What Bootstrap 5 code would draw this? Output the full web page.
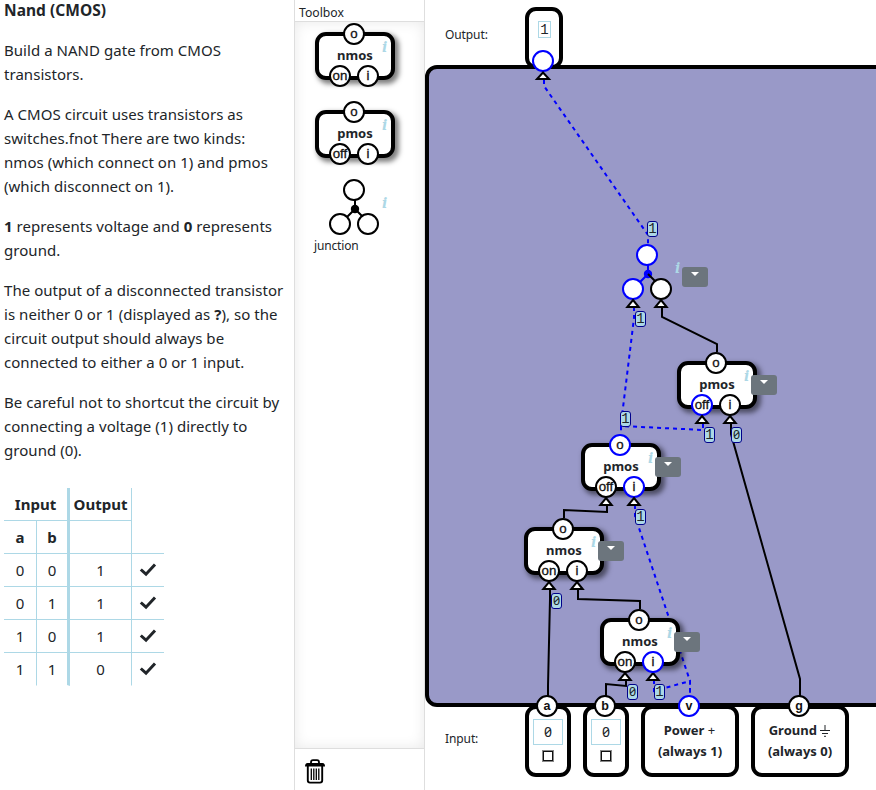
<!DOCTYPE html>
<html lang="en">
<head>
<meta charset="utf-8">
<meta name="viewport" content="width=device-width, initial-scale=1">
<title>Nand (CMOS)</title>
<link href="https://cdn.jsdelivr.net/npm/bootstrap@5.3.0/dist/css/bootstrap.min.css" rel="stylesheet">
<style>
body{font-family:"Noto Sans","Open Sans",sans-serif;font-size:15px;line-height:24px;color:#212529;height:790px;overflow:hidden}
.task{width:295px;border-right:1px solid #dedede;padding:0 0 0 4px;white-space:nowrap}
.task p,.task h1{font-size:15px;line-height:24px;margin:0 0 16px;letter-spacing:.04px}
.task h1{font-weight:700;font-size:15.5px;margin-top:-2px}
.truth{border-collapse:separate;border-spacing:0;table-layout:fixed;width:160px;margin-top:26px;text-align:center}
.truth td,.truth th{height:33px;padding:0;line-height:24px;border-bottom:1px solid lightblue;border-right:1px solid lightblue;vertical-align:middle}
.truth .thick{border-right-width:3px}
.truth td:last-child{border-right:0}
.truth tr:first-child td:last-child,.truth tr:last-child td{border-bottom-color:transparent}
.truth svg{display:block;margin:-1px auto 0}
.toolbox{width:130px;border-right:1px solid #dedede}
.toolbox-head{height:22px;border-bottom:1px solid #dedede;font-size:12.2px;line-height:24px;padding-left:4px;padding-top:1px}
.toolbox-list{padding:10px 0 0 20px;gap:30px;box-shadow:inset 0 0 14px rgba(0,0,0,.09)}
.toolbox-foot{height:42px;border-top:1px solid #dedede;padding:10px 0 0 10px}
.part{position:relative;width:80px;height:48px;flex:none}
.shell{width:80px;height:48px;border:4px solid #000;border-radius:11px;background:#fff;box-shadow:3px 3px 5px 1px rgba(0,0,0,.5);font-weight:700;font-size:13px;line-height:36px;padding-top:1px;text-align:center}
.pin{position:absolute;width:22px;height:22px;border:2px solid #000;border-radius:50%;background:#fff;color:#111;font:13.3px/18px "Liberation Sans",sans-serif;-webkit-text-stroke:.3px #111;display:flex;justify-content:center;white-space:nowrap;z-index:2}
.pin.live,.port.live{border-color:#00f}
.pin-o{left:28px;top:-9px}
.pin-l{left:14px;top:33px}
.pin-r{left:42px;top:33px}
.junction .pin-l{top:25px}.junction .pin-r{top:25px}
.fork{position:absolute;left:0;top:0;z-index:1}
.info{position:absolute;left:67px;top:6px;font:italic bold 14px/18px "DejaVu Serif",serif;color:lightblue}
.drop{position:absolute;left:74px;top:14px;width:26px;height:20px;padding:0;border:0;border-radius:3px;background:#6c757d;display:flex;justify-content:center;z-index:3}
.drop::after{content:"";margin-top:5px;height:0;border:4px solid transparent;border-top-color:#fff;border-bottom:0}
.junction-name{font-size:12px;line-height:18px;margin:-29px 0 0 -1px;letter-spacing:-.15px}
.board{width:451px;position:relative;overflow:hidden}
.out-strip{height:65px;padding:7px 0 0 20px}
.strip-label{width:80px;font-size:12px;line-height:20px;letter-spacing:-.1px}
.out-strip .strip-label{margin-top:18px}
.terminal{position:relative;border:4px solid #000;border-radius:11px;background:#fff;z-index:1;flex:none}
.terminal-out{width:38px;height:62px;padding-top:10px}
.value{border:1px solid lightblue;font-family:"Liberation Mono",monospace;text-align:center}
.terminal-out .value{width:13px;height:17px;font-size:14px;line-height:16px;margin-left:9px}
.port{position:absolute;width:22px;height:22px;border:2px solid #000;border-radius:50%;background:#fff;font:bold 12.5px/18px "Liberation Sans",sans-serif;text-align:center;color:#111;z-index:4}
.terminal-out .port{left:3px;top:39px}
.field{height:642px;margin-right:-20px;border:4px solid #000;border-radius:12px;background:#9999c8}
.in-strip{height:83px;padding:0 0 0 20px;margin-top:-2px}
.in-strip .strip-label{margin-top:24px}
.in-strip .terminal{height:72px;margin-right:12px;font-weight:700;font-size:13px;line-height:21px;text-align:center;padding-top:11px}
.terminal-bit{width:46px}
.terminal-wide{width:98px;text-indent:-1px}
.terminal-bit .value{width:30px;height:26px;margin:-1px 0 6px 4px;font-weight:400;font-size:14px;line-height:24px}
.tick{width:10px;height:10px;border:1px solid #111;outline:.5px solid #888;margin:0 auto}
.thin{font-weight:400}
.zero{font-family:"Noto Sans",sans-serif;font-variant-numeric:slashed-zero}
.diagram{position:absolute;left:0;top:0;width:451px;height:790px;z-index:2}
.wires{position:absolute;left:0;top:0;z-index:3}
.diagram .part{position:absolute}
#j1{left:183px;top:253px}
#p1{left:252px;top:361px}
#p2{left:156px;top:443px}
#n1{left:99px;top:527px}
#n2{left:175px;top:618px}
.bit{position:absolute;width:11px;height:16px;border:1px solid #00008b;border-radius:3px;background:lightblue;font:14px/15px "Liberation Mono",monospace;display:flex;justify-content:center;z-index:5}
.bit.zero{font:12.5px/14px "Noto Sans",sans-serif;font-variant-numeric:slashed-zero}
#b1{left:222px;top:221px}#b2{left:210px;top:311px}#b3{left:195px;top:411px}
#b4{left:279px;top:427px}#b5{left:306px;top:427px}#b6{left:210px;top:509px}
#b7{left:126px;top:593px}#b8{left:202px;top:684px}#b9{left:229px;top:684px}
#pa{left:111px;top:695px}#pb{left:169px;top:695px}#pv{left:253px;top:695px}#pg{left:363px;top:695px}
</style>
<script src="https://cdn.jsdelivr.net/npm/bootstrap@5.3.0/dist/js/bootstrap.bundle.min.js"></script>
</head>
<body class="d-flex bg-white">
<svg width="0" height="0" class="position-absolute">
  <symbol id="check" viewBox="0 0 18 14"><path d="M1.800 6.500 7 11.200 16 1.500" fill="none" stroke="#212529" stroke-width="3"/></symbol>
</svg>

<aside class="task flex-shrink-0">
  <h1>Nand (CMOS)</h1>
  <p>Build a NAND gate from CMOS<br>transistors.</p>
  <p>A CMOS circuit uses transistors as<br>switches.fnot There are two kinds:<br>nmos (which connect on 1) and pmos<br>(which disconnect on 1).</p>
  <p><b>1</b> represents voltage and <b>0</b> represents<br>ground.</p>
  <p>The output of a disconnected transistor<br>is neither 0 or 1 (displayed as <b>?</b>), so the<br>circuit output should always be<br>connected to either a 0 or 1 input.</p>
  <p>Be careful not to shortcut the circuit by<br>connecting a voltage (1) directly to<br>ground (0).</p>
  <table class="truth">
    <colgroup><col width="33"><col width="33"><col width="62"><col width="32"></colgroup>
    <tr><th colspan="2" class="thick">Input</th><th>Output</th><td></td></tr>
    <tr><th>a</th><th class="thick">b</th><th></th><td></td></tr>
    <tr><td>0</td><td class="thick">0</td><td>1</td><td><svg width="18" height="14"><use href="#check"/></svg></td></tr>
    <tr><td>0</td><td class="thick">1</td><td>1</td><td><svg width="18" height="14"><use href="#check"/></svg></td></tr>
    <tr><td>1</td><td class="thick">0</td><td>1</td><td><svg width="18" height="14"><use href="#check"/></svg></td></tr>
    <tr><td>1</td><td class="thick">1</td><td>0</td><td><svg width="18" height="14"><use href="#check"/></svg></td></tr>
  </table>
</aside>

<section class="toolbox d-flex flex-column flex-shrink-0">
  <div class="toolbox-head">Toolbox</div>
  <div class="toolbox-list d-flex flex-column flex-grow-1">
    <div class="part"><div class="shell">nmos</div><span class="pin pin-o">o</span><span class="pin pin-l">on</span><span class="pin pin-r">i</span><span class="info">i</span></div>
    <div class="part"><div class="shell">pmos</div><span class="pin pin-o">o</span><span class="pin pin-l">off</span><span class="pin pin-r">i</span><span class="info">i</span></div>
    <div class="part junction">
      <svg class="fork" width="80" height="48"><path d="M40 10V21L28 33M40 21 52 33" fill="none" stroke="#000" stroke-width="2"/><circle cx="40" cy="21" r="4.2"/></svg>
      <span class="pin pin-o"></span><span class="pin pin-l"></span><span class="pin pin-r"></span><span class="info">i</span>
    </div>
    <div class="junction-name">junction</div>
  </div>
  <div class="toolbox-foot">
    <svg width="20" height="25" viewBox="0 0 20 25" class="d-block"><path d="M6 5V3.5Q6 1.2 8 1.2h4Q14 1.2 14 3.5V5" fill="none" stroke="#000" stroke-width="1.8"/><path d="M0 7.5Q0 4 2.5 4h15Q20 4 20 7.5z"/><path d="M2.8 7V21.5Q2.8 23.6 5 23.6h10q2.200 0 2.200-2.100V7" fill="none" stroke="#000" stroke-width="1.900"/><path d="M6.300 9.500v11.500M8.800 9.500v11.500M11.300 9.500v11.500M13.800 9.500v11.500" stroke="#000" stroke-width="1.300"/></svg>
  </div>
</section>

<main class="board flex-shrink-0">
  <div class="out-strip d-flex">
    <div class="strip-label">Output:</div>
    <div class="terminal terminal-out"><div class="value">1</div><span class="port live"></span></div>
  </div>
  <div class="field"></div>
  <div class="in-strip d-flex">
    <div class="strip-label">Input:</div>
    <div class="terminal terminal-bit"><div class="value zero">0</div><div class="tick"></div></div>
    <div class="terminal terminal-bit"><div class="value zero">0</div><div class="tick"></div></div>
    <div class="terminal terminal-wide">Power <span class="thin">+</span><br>(always 1)</div>
    <div class="terminal terminal-wide">Ground <svg width="10" height="12" viewBox="0 0 10 12"><path d="M5 0V5.500M0 5.500H10M2 8.500H8M4 11.300H6" stroke="#212529" stroke-width="1"/></svg><br>(always 0)</div>
  </div>

  <div class="diagram">
    <div class="part junction" id="j1">
      <svg class="fork" width="80" height="48"><path d="M40 10V21L28 33" fill="none" stroke="#00f" stroke-width="2"/><circle cx="40" cy="21" r="4.200" fill="#00f"/><path d="M40 21 52 33" stroke="#000" stroke-width="2"/></svg>
      <span class="pin pin-o live"></span><span class="pin pin-l live"></span><span class="pin pin-r"></span><span class="info">i</span><button class="drop" aria-label="Menu"></button>
    </div>
    <div class="part" id="p1"><div class="shell">pmos</div><span class="pin pin-o">o</span><span class="pin pin-l live">off</span><span class="pin pin-r">i</span><span class="info">i</span><button class="drop" aria-label="Menu"></button></div>
    <div class="part" id="p2"><div class="shell">pmos</div><span class="pin pin-o live">o</span><span class="pin pin-l">off</span><span class="pin pin-r live">i</span><span class="info">i</span><button class="drop" aria-label="Menu"></button></div>
    <div class="part" id="n1"><div class="shell">nmos</div><span class="pin pin-o">o</span><span class="pin pin-l">on</span><span class="pin pin-r">i</span><span class="info">i</span><button class="drop" aria-label="Menu"></button></div>
    <svg class="wires" width="451" height="790" viewBox="425 0 451 790">
      <g fill="none" stroke="#000" stroke-width="2">
        <path d="M717 352V344L662 317V307"/>
        <path d="M800 696V679L731 434V424"/>
        <path d="M564 518V510L607 512V505"/>
        <path d="M640 609V601L578 599V589"/>
        <path d="M548 696V686L550 599V589"/>
        <path d="M606 696V684L626 686V680"/>
      </g>
      <g fill="none" stroke="#00f" stroke-width="2" stroke-dasharray="4 4">
        <path d="M544 80V86L648 235V245"/>
        <path d="M634 307V318L621 424V434"/>
        <path d="M703 424V430L621 426V434"/>
        <path d="M635 505V516L690 681V696"/>
        <path d="M654 680V691L690 681V696"/>
      </g>
      <g fill="#fff" stroke="#000" stroke-width="2">
        <path d="M543 72.500 549 79H537z"/>
        <path d="M633 300 638.700 307H627.300z"/>
        <path d="M661 300 666.700 307H655.300z"/>
        <path d="M702 416 707.700 423H696.300z"/>
        <path d="M730 416 735.700 423H724.300z"/>
        <path d="M606 498 611.700 505H600.300z"/>
        <path d="M634 498 639.700 505H628.300z"/>
        <path d="M549 582 554.700 589H543.300z"/>
        <path d="M577 582 582.700 589H571.300z"/>
        <path d="M625 673 630.700 680H619.300z"/>
        <path d="M653 673 658.700 680H647.300z"/>
      </g>
    </svg>
    <div class="part z-3" id="n2"><div class="shell">nmos</div><span class="pin pin-o">o</span><span class="pin pin-l">on</span><span class="pin pin-r live">i</span><span class="info">i</span><button class="drop" aria-label="Menu"></button></div>
    <span class="bit" id="b1">1</span><span class="bit" id="b2">1</span><span class="bit" id="b3">1</span>
    <span class="bit" id="b4">1</span><span class="bit zero" id="b5">0</span><span class="bit" id="b6">1</span>
    <span class="bit zero" id="b7">0</span><span class="bit zero" id="b8">0</span><span class="bit" id="b9">1</span>
    <span class="port" id="pa">a</span><span class="port" id="pb">b</span><span class="port live" id="pv">v</span><span class="port" id="pg">g</span>
  </div>
</main>
</body>
</html>
